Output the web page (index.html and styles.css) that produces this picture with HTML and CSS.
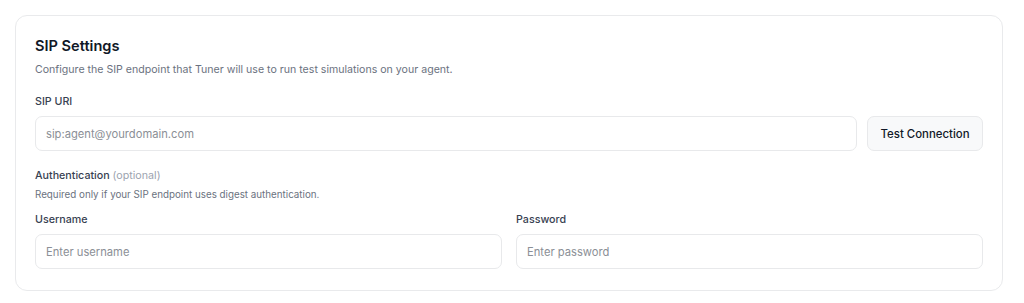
FILE: index.html
```html
<!DOCTYPE html>
<html>
<head>
<meta charset="utf-8">
<link rel="stylesheet" href="styles.css">
</head>
<body>
<div class="page">
  <section class="card">
    <h2 class="title">SIP Settings</h2>
    <p class="desc">Configure the SIP endpoint that Tuner will use to run test simulations on your agent.</p>
    <label class="label label-uri">SIP URI</label>
    <div class="uri-row">
      <input class="input" type="text" placeholder="sip:agent@yourdomain.com">
      <button class="btn" type="button">Test Connection</button>
    </div>
    <div class="auth-head">
      <div class="label">Authentication <span class="optional">(optional)</span></div>
      <p class="hint">Required only if your SIP endpoint uses digest authentication.</p>
    </div>
    <div class="cred-grid">
      <div class="field">
        <label class="label">Username</label>
        <input class="input" type="text" placeholder="Enter username">
      </div>
      <div class="field">
        <label class="label">Password</label>
        <input class="input" type="password" placeholder="Enter password">
      </div>
    </div>
  </section>
</div>
</body>
</html>
```

FILE: styles.css
```css
* { box-sizing: border-box; }
html, body { margin: 0; background: #ffffff; }
body {
  font-family: Inter, "Noto Sans", sans-serif;
  color: #111827;
}
.page { padding: 15px 21px 0 15px; }
.card {
  border: 1px solid #e9eaec;
  border-radius: 12px;
  padding: 18px 19px 21px 19px;
  background: #fff;
}
.title {
  margin: 0;
  font-size: 14.6px;
  line-height: 24px;
  font-weight: 600;
  color: #111827;
}
.desc {
  margin: 4px 0 0;
  font-size: 10.6px;
  line-height: 16px;
  color: #6b7280;
}
.label {
  display: block;
  font-size: 10.7px;
  line-height: 16px;
  font-weight: 500;
  color: #374151;
}
.label-uri { margin-top: 16px; }
.uri-row {
  display: flex;
  gap: 10px;
  margin-top: 6px;
}
.uri-row .input { flex: 1; }
.input {
  height: 35px;
  border: 1px solid #e8e9eb;
  border-radius: 7px;
  padding: 0 10px;
  font-family: inherit;
  font-size: 11.2px;
  color: #111827;
  background: #fff;
  outline: none;
  width: 100%;
}
.input::placeholder { color: #8b8f96; }
.btn {
  flex: none;
  width: 116px;
  height: 35px;
  border: 1px solid #e8e9eb;
  border-radius: 7px;
  background: #f8f9fa;
  font-family: inherit;
  font-size: 11.4px;
  font-weight: 500;
  color: #111827;
}
.auth-head { margin-top: 17px; }
.optional { font-weight: 400; color: #9ca3af; }
.hint {
  margin: 3px 0 0;
  font-size: 9.8px;
  line-height: 15px;
  color: #6b7280;
}
.cred-grid {
  display: grid;
  grid-template-columns: 1fr 1fr;
  gap: 14px;
  margin-top: 10px;
}
.field .input { margin-top: 6px; }
```
